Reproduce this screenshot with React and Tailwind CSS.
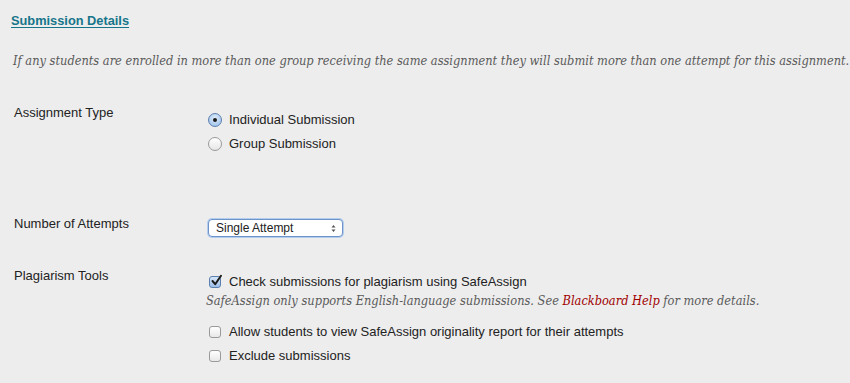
import React from "react";

const sans = { fontFamily: '"Liberation Sans", Arial, sans-serif' };
const serif = { fontFamily: '"DejaVu Serif Condensed", "DejaVu Serif", serif', fontStretch: "semi-condensed" };

function Radio({ checked }) {
  return (
    <span className="relative inline-block w-[14px] h-[14px] rounded-full border shrink-0"
      style={{ background: checked ? "radial-gradient(circle at 50% 35%, #e0edfb, #93bbe9)" : "linear-gradient(#ffffff,#e6e6e6)", borderColor: checked ? "#5b7fae" : "#9a9a9a" }}>
      {checked && <span className="absolute left-1/2 top-1/2 w-[4px] h-[4px] -ml-[2px] -mt-[2px] rounded-full bg-[#1a1a1a]" />}
    </span>
  );
}

function Check({ checked }) {
  return (
    <span className="relative inline-block w-[12px] h-[12px] rounded-[3px] border shrink-0"
      style={{ background: checked ? "linear-gradient(#d7e6f8,#9cc0ea)" : "linear-gradient(#ffffff,#e8e8e8)", borderColor: checked ? "#5b7fae" : "#9a9a9a" }}>
      {checked && (
        <svg className="absolute left-[0px] top-[-3px]" width="13" height="13" viewBox="0 0 13 13">
          <path d="M2.5 7 L5.2 10.2 L11 1.8" fill="none" stroke="#1c1c1c" strokeWidth="2" strokeLinecap="round" strokeLinejoin="round" />
        </svg>
      )}
    </span>
  );
}

export default function App() {
  return (
    <div className="w-[850px] h-[383px] bg-[#ededed] overflow-hidden text-[#222]" style={sans}>
      <div className="pl-[11px] pt-[12px] leading-[15px]">
        <span className="text-[12.8px] font-bold text-[#16758a] underline underline-offset-[2px]">Submission Details</span>
      </div>
      <div className="pl-[13px] mt-[25px] leading-[16px] text-[12.7px] italic text-[#5a5a5a] whitespace-nowrap" style={serif}>
        If any students are enrolled in more than one group receiving the same assignment they will submit more than one attempt for this assignment.
      </div>

      <div className="flex pl-[14px] mt-[36px] text-[13px] leading-[16px]">
        <div className="w-[194px]">Assignment Type</div>
        <div className="flex flex-col gap-[8px] pt-[7px]">
          <label className="flex items-center gap-[7px] h-[16px]"><Radio checked />Individual Submission</label>
          <label className="flex items-center gap-[7px] h-[16px]"><Radio />Group Submission</label>
        </div>
      </div>

      <div className="flex pl-[14px] mt-[64px] text-[13px] leading-[16px] items-start">
        <div className="w-[194px]">Number of Attempts</div>
        <div className="mt-[3px] w-[135px] h-[18px] rounded-[4px] border border-[#6d93c8] bg-white flex items-center justify-between pl-[7px] pr-[6px] text-[12px] shadow-[0_0_0_1px_#b3cdee]">
          <span>Single Attempt</span>
          <svg width="5" height="9" viewBox="0 0 5 9"><path d="M0.5 3.5 L2.5 1 L4.5 3.5Z M0.5 5.5 L2.5 8 L4.5 5.5Z" fill="#555" /></svg>
        </div>
      </div>

      <div className="flex pl-[14px] mt-[31px] text-[13px] leading-[16px]">
        <div className="w-[194px]">Plagiarism Tools</div>
        <div className="flex flex-col pt-[6px]">
          <label className="flex items-center gap-[8px] h-[16px] pl-[1px]"><Check checked />Check submissions for plagiarism using SafeAssign</label>
          <div className="mt-[3px] -ml-[2px] leading-[16px] text-[12.7px] italic text-[#5a5a5a] whitespace-nowrap" style={serif}>
            SafeAssign only supports English-language submissions. See <span className="text-[#a00000]">Blackboard Help</span> for more details.
          </div>
          <label className="flex items-center gap-[8px] h-[16px] pl-[1px] mt-[15px]"><Check />Allow students to view SafeAssign originality report for their attempts</label>
          <label className="flex items-center gap-[8px] h-[16px] pl-[1px] mt-[8px]"><Check />Exclude submissions</label>
        </div>
      </div>
    </div>
  );
}
